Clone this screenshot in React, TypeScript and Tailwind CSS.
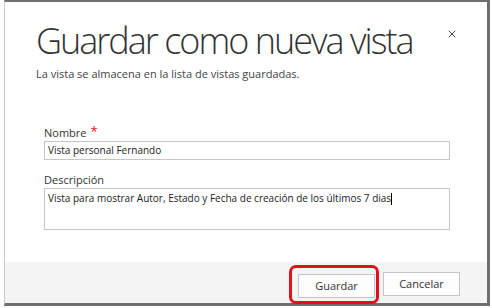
import { X } from 'lucide-react';

const font = { fontFamily: '"Open Sans", "Liberation Sans", sans-serif' };

const App = () => {
  return (
    <div className="w-[492px] h-[308px] bg-white overflow-hidden" style={font}>
      <div className="ml-[4px] w-[486px] h-[306px] flex flex-col bg-white border-t-2 border-t-[#707070] border-l border-l-[#c9c9c9] border-r-[3px] border-r-[#6f6f6f] border-b-[3px] border-b-[#6f6f6f]">
        {/* header */}
        <div className="relative pl-[31px] pt-[17px]">
          <h1 className="text-[36px] leading-[44px] font-light text-[#333] tracking-[-2px]">
            Guardar como nueva vista
          </h1>
          <p className="mt-[4px] text-[11px] leading-[14px] text-[#444]">
            La vista se almacena en la lista de vistas guardadas.
          </p>
          <button className="absolute right-[29px] top-[26px] text-[#333]">
            <X size={12} strokeWidth={1.8} />
          </button>
        </div>

        {/* form */}
        <div className="flex-1 pl-[39px] pr-[37px] pt-[45px]">
          <label className="flex items-start gap-[4px] text-[11px] leading-[14px] text-[#333]">
            Nombre <span className="text-[#e3101b] text-[13px] leading-[10px]">*</span>
          </label>
          <div className="mt-[1px] h-[19px] border border-[#c6c6c6] px-[3px] text-[10px] leading-[17px] text-[#222]">
            Vista personal Fernando
          </div>
          <label className="block mt-[13px] text-[11px] leading-[14px] text-[#333]">Descripción</label>
          <div className="mt-[1px] h-[42px] border border-[#c6c6c6] px-[3px] pt-[2px] text-[10px] leading-[14px] text-[#222]">
            Vista para mostrar Autor, Estado y Fecha de creación de los últimos 7 dias
            <span className="inline-block w-px h-[12px] bg-black align-middle" />
          </div>
        </div>

        {/* footer */}
        <div className="h-[41px] bg-[#f4f4f4] flex items-start justify-end gap-[8px] pr-[27px] pt-[10px]">
          <div className="relative">
            <button className="w-[77px] h-[24px] bg-[#fdfdfd] border border-[#c6c6c6] text-[11px] text-[#333]">
              Guardar
            </button>
            <span className="absolute -left-[9px] -right-[4px] -top-[7px] -bottom-[6px] border-[3px] border-[#e3101b] rounded-[7px]" />
          </div>
          <button className="w-[77px] h-[24px] bg-[#fdfdfd] border border-[#c6c6c6] text-[11px] text-[#333]">
            Cancelar
          </button>
        </div>
      </div>
    </div>
  );
};

export default App;
